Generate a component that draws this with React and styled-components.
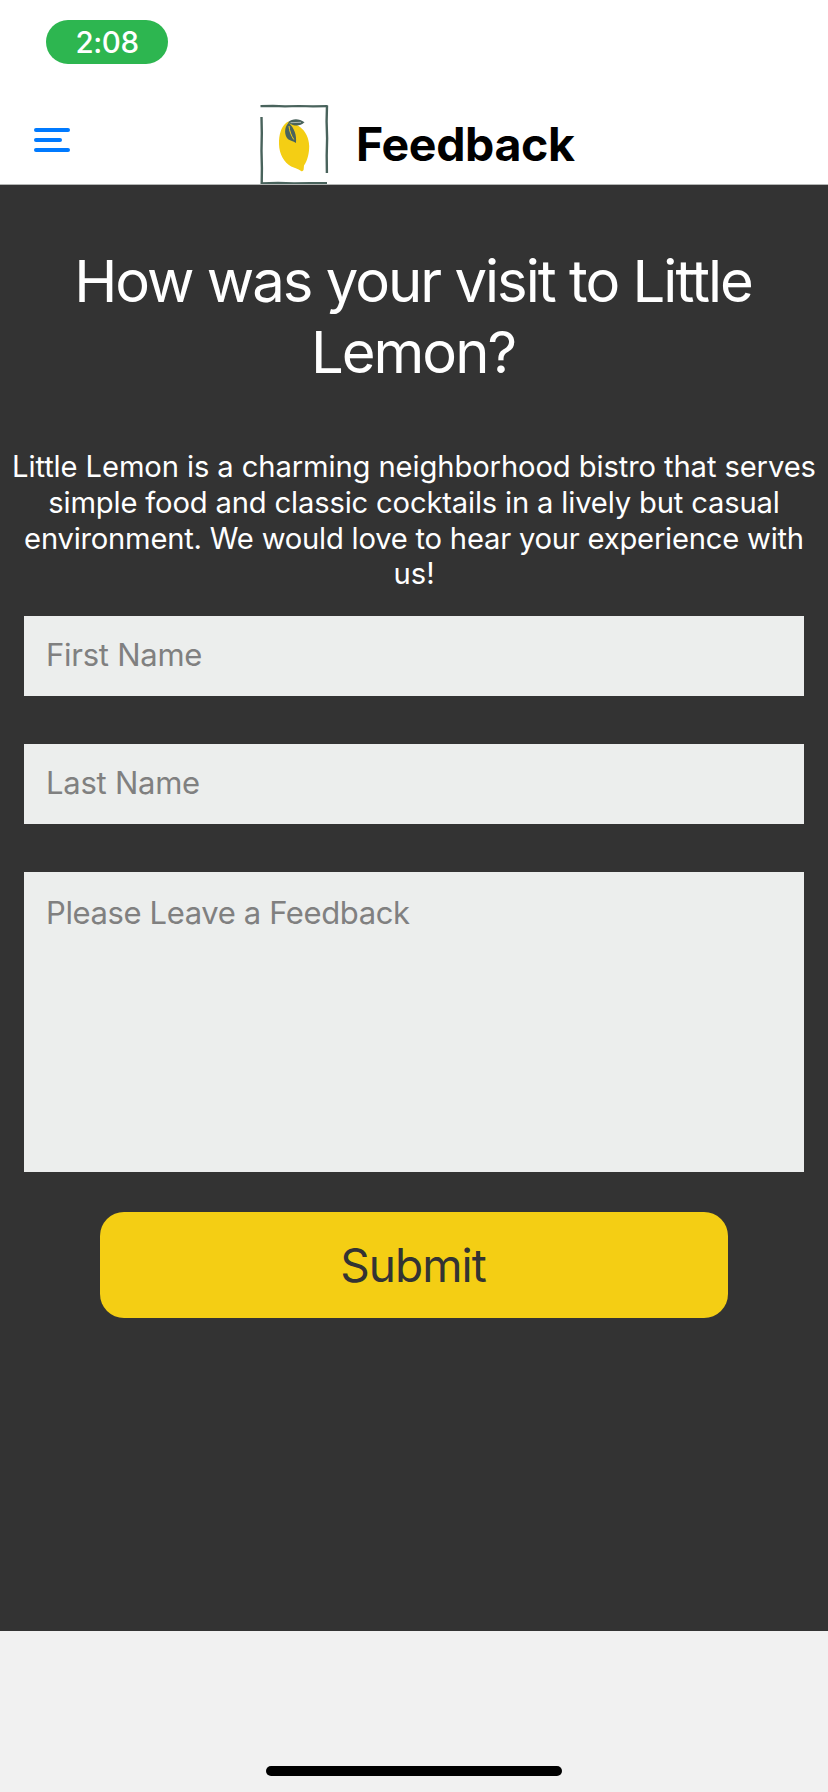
import React from "react";
import styled, { createGlobalStyle } from "styled-components";

const GlobalStyle = createGlobalStyle`
  * { box-sizing: border-box; }
  body { margin: 0; font-family: Inter, Roboto, sans-serif; background: #f1f1f1; }
`;

const Screen = styled.div`
  display: flex;
  flex-direction: column;
  width: 828px;
  height: 1792px;
  background: #f1f1f1;
`;

const Header = styled.header`
  display: flex;
  flex-direction: column;
  height: 185px;
  background: #fff;
  border-bottom: 1px solid #b4b6b5;
`;

const StatusBar = styled.div`
  height: 104px;
  padding: 20px 46px;
`;

const TimePill = styled.div`
  width: 122px;
  height: 44px;
  border-radius: 22px;
  background: #2db650;
  color: #fff;
  font-size: 29.5px;
  font-weight: 450;
  line-height: 44px;
  letter-spacing: -0.4px;
  text-align: center;
`;

const NavBar = styled.div`
  display: grid;
  grid-template-columns: 260px 69px 1fr;
  height: 80px;
`;

const MenuButton = styled.button`
  display: flex;
  flex-direction: column;
  gap: 6px;
  align-self: start;
  margin: 24px 0 0 34px;
  width: 36px;
  padding: 0;
  border: 0;
  background: none;
`;

const MenuBar = styled.span`
  width: ${({ $width }) => $width}px;
  height: 4px;
  border-radius: 2px;
  background: #007aff;
`;

const NavTitle = styled.h1`
  margin: 12px 0 0 27px;
  font-size: 46.5px;
  font-weight: 700;
  line-height: 56px;
  letter-spacing: -0.4px;
  color: #000;
`;

const Content = styled.main`
  display: flex;
  flex-direction: column;
  height: 1446px;
  background: #333;
  color: #fff;
`;

const Heading = styled.h2`
  margin: 61px 0 0;
  padding-right: 2px;
  font-size: 58px;
  font-weight: 400;
  line-height: 71px;
  letter-spacing: -2px;
  text-align: center;
`;

const Intro = styled.p`
  margin: 61px 0 0;
  font-size: 29.2px;
  line-height: 35.8px;
  text-align: center;
`;

const IntroLine = styled.span`
  display: block;
  white-space: nowrap;
  letter-spacing: ${({ $tracking }) => $tracking}px;
`;

const Form = styled.form`
  display: flex;
  flex-direction: column;
  margin-top: 23.8px;
  padding: 0 24px;
  gap: 48px;
`;

const Field = styled.input`
  height: 80px;
  padding: 0 22px 2px;
  border: 0;
  border-radius: 0;
  outline: 0;
  background: #eceeed;
  font: 400 31px Inter, Roboto, sans-serif;
  letter-spacing: -0.25px;
  color: #333;
  &::placeholder { color: #808080; opacity: 1; }
`;

const Message = styled(Field)`
  height: 300px;
  padding: 21px 22px;
  line-height: 40px;
  letter-spacing: -0.38px;
  resize: none;
`;

const Submit = styled.button`
  align-self: center;
  width: 628px;
  height: 106px;
  margin-top: -8px;
  padding: 0 2px 0 0;
  border: 0;
  border-radius: 24px;
  background: #f4ce14;
  color: #333;
  font: 400 46px Inter, Roboto, sans-serif;
  letter-spacing: -1px;
`;

const Footer = styled.footer`
  display: flex;
  flex: 1;
  align-items: flex-end;
  justify-content: center;
  padding-bottom: 16px;
`;

const HomeIndicator = styled.div`
  width: 296px;
  height: 10px;
  border-radius: 5px;
  background: #000;
`;

function Logo() {
  return (
    <svg width="69" height="80" viewBox="0 0 69 80" fill="none">
      <path d="M.5 2.2 13 1.8l12 .5 14-.3 14 .4 14.500-.3" stroke="#49635c" strokeWidth="2.2" />
      <path d="M67 1.500l-.4 16 .5 17-.4 17 .2 17.500" stroke="#49635c" strokeWidth="2.4" />
      <path d="M1.500 13l.3 16-.3 18 .4 17-.2 16" stroke="#49635c" strokeWidth="2.4" />
      <path d="M1 79.300 18 78.900l16 .4 16-.3 17 .2" stroke="#49635c" strokeWidth="2.200" />
      <path d="M26 19C21 23 18.900 31 19 40c.2 10 5 18.500 12.200 22.500 3.500 1.500 7 2.300 9.500 4.300 1.600 1.200 2.800.2 3-1.700l.3-3.500C47.800 56 49.200 49 49.200 42c-.3-8-3.700-15-9.200-19C35 19.500 31 15 26 19Z" fill="#f4ce14" />
      <path d="M28.500 18C32 14.500 39 14 44.500 18.300 40 22.500 34.500 22.500 28.500 19Z" fill="#49635c" />
      <path d="M30.500 18.700 41 18.300" stroke="#d7ded6" strokeWidth=".7" />
      <path d="M28.500 18.700C24 23.500 24 31.500 28.500 35.500c2 1.200 4.500 1.500 7.500 3.500.8-8-1.500-15-7.500-20.300Z" fill="#49635c" />
      <path d="M29 22c.4 5 2.200 9.500 4.800 13.500" stroke="#f4ce14" strokeWidth="1" />
    </svg>
  );
}

export default function App() {
  return (
    <Screen>
      <GlobalStyle />
      <Header>
        <StatusBar>
          <TimePill>2:08</TimePill>
        </StatusBar>
        <NavBar>
          <MenuButton type="button" aria-label="Menu">
            <MenuBar $width={36} />
            <MenuBar $width={28} />
            <MenuBar $width={36} />
          </MenuButton>
          <Logo />
          <NavTitle>Feedback</NavTitle>
        </NavBar>
      </Header>
      <Content>
        <Heading>
          How was your visit to Little
          <br />
          Lemon?
        </Heading>
        <Intro>
          <IntroLine $tracking={-0.11}>
            Little Lemon is a charming neighborhood bistro that serves
          </IntroLine>
          <IntroLine $tracking={-0.17}>
            simple food and classic cocktails in a lively but casual
          </IntroLine>
          <IntroLine $tracking={-0.22}>
            environment. We would love to hear your experience with
          </IntroLine>
          <IntroLine $tracking={0}>us!</IntroLine>
        </Intro>
        <Form>
          <Field placeholder="First Name" />
          <Field placeholder="Last Name" />
          <Message as="textarea" placeholder="Please Leave a Feedback" />
          <Submit type="button">Submit</Submit>
        </Form>
      </Content>
      <Footer>
        <HomeIndicator />
      </Footer>
    </Screen>
  );
}
